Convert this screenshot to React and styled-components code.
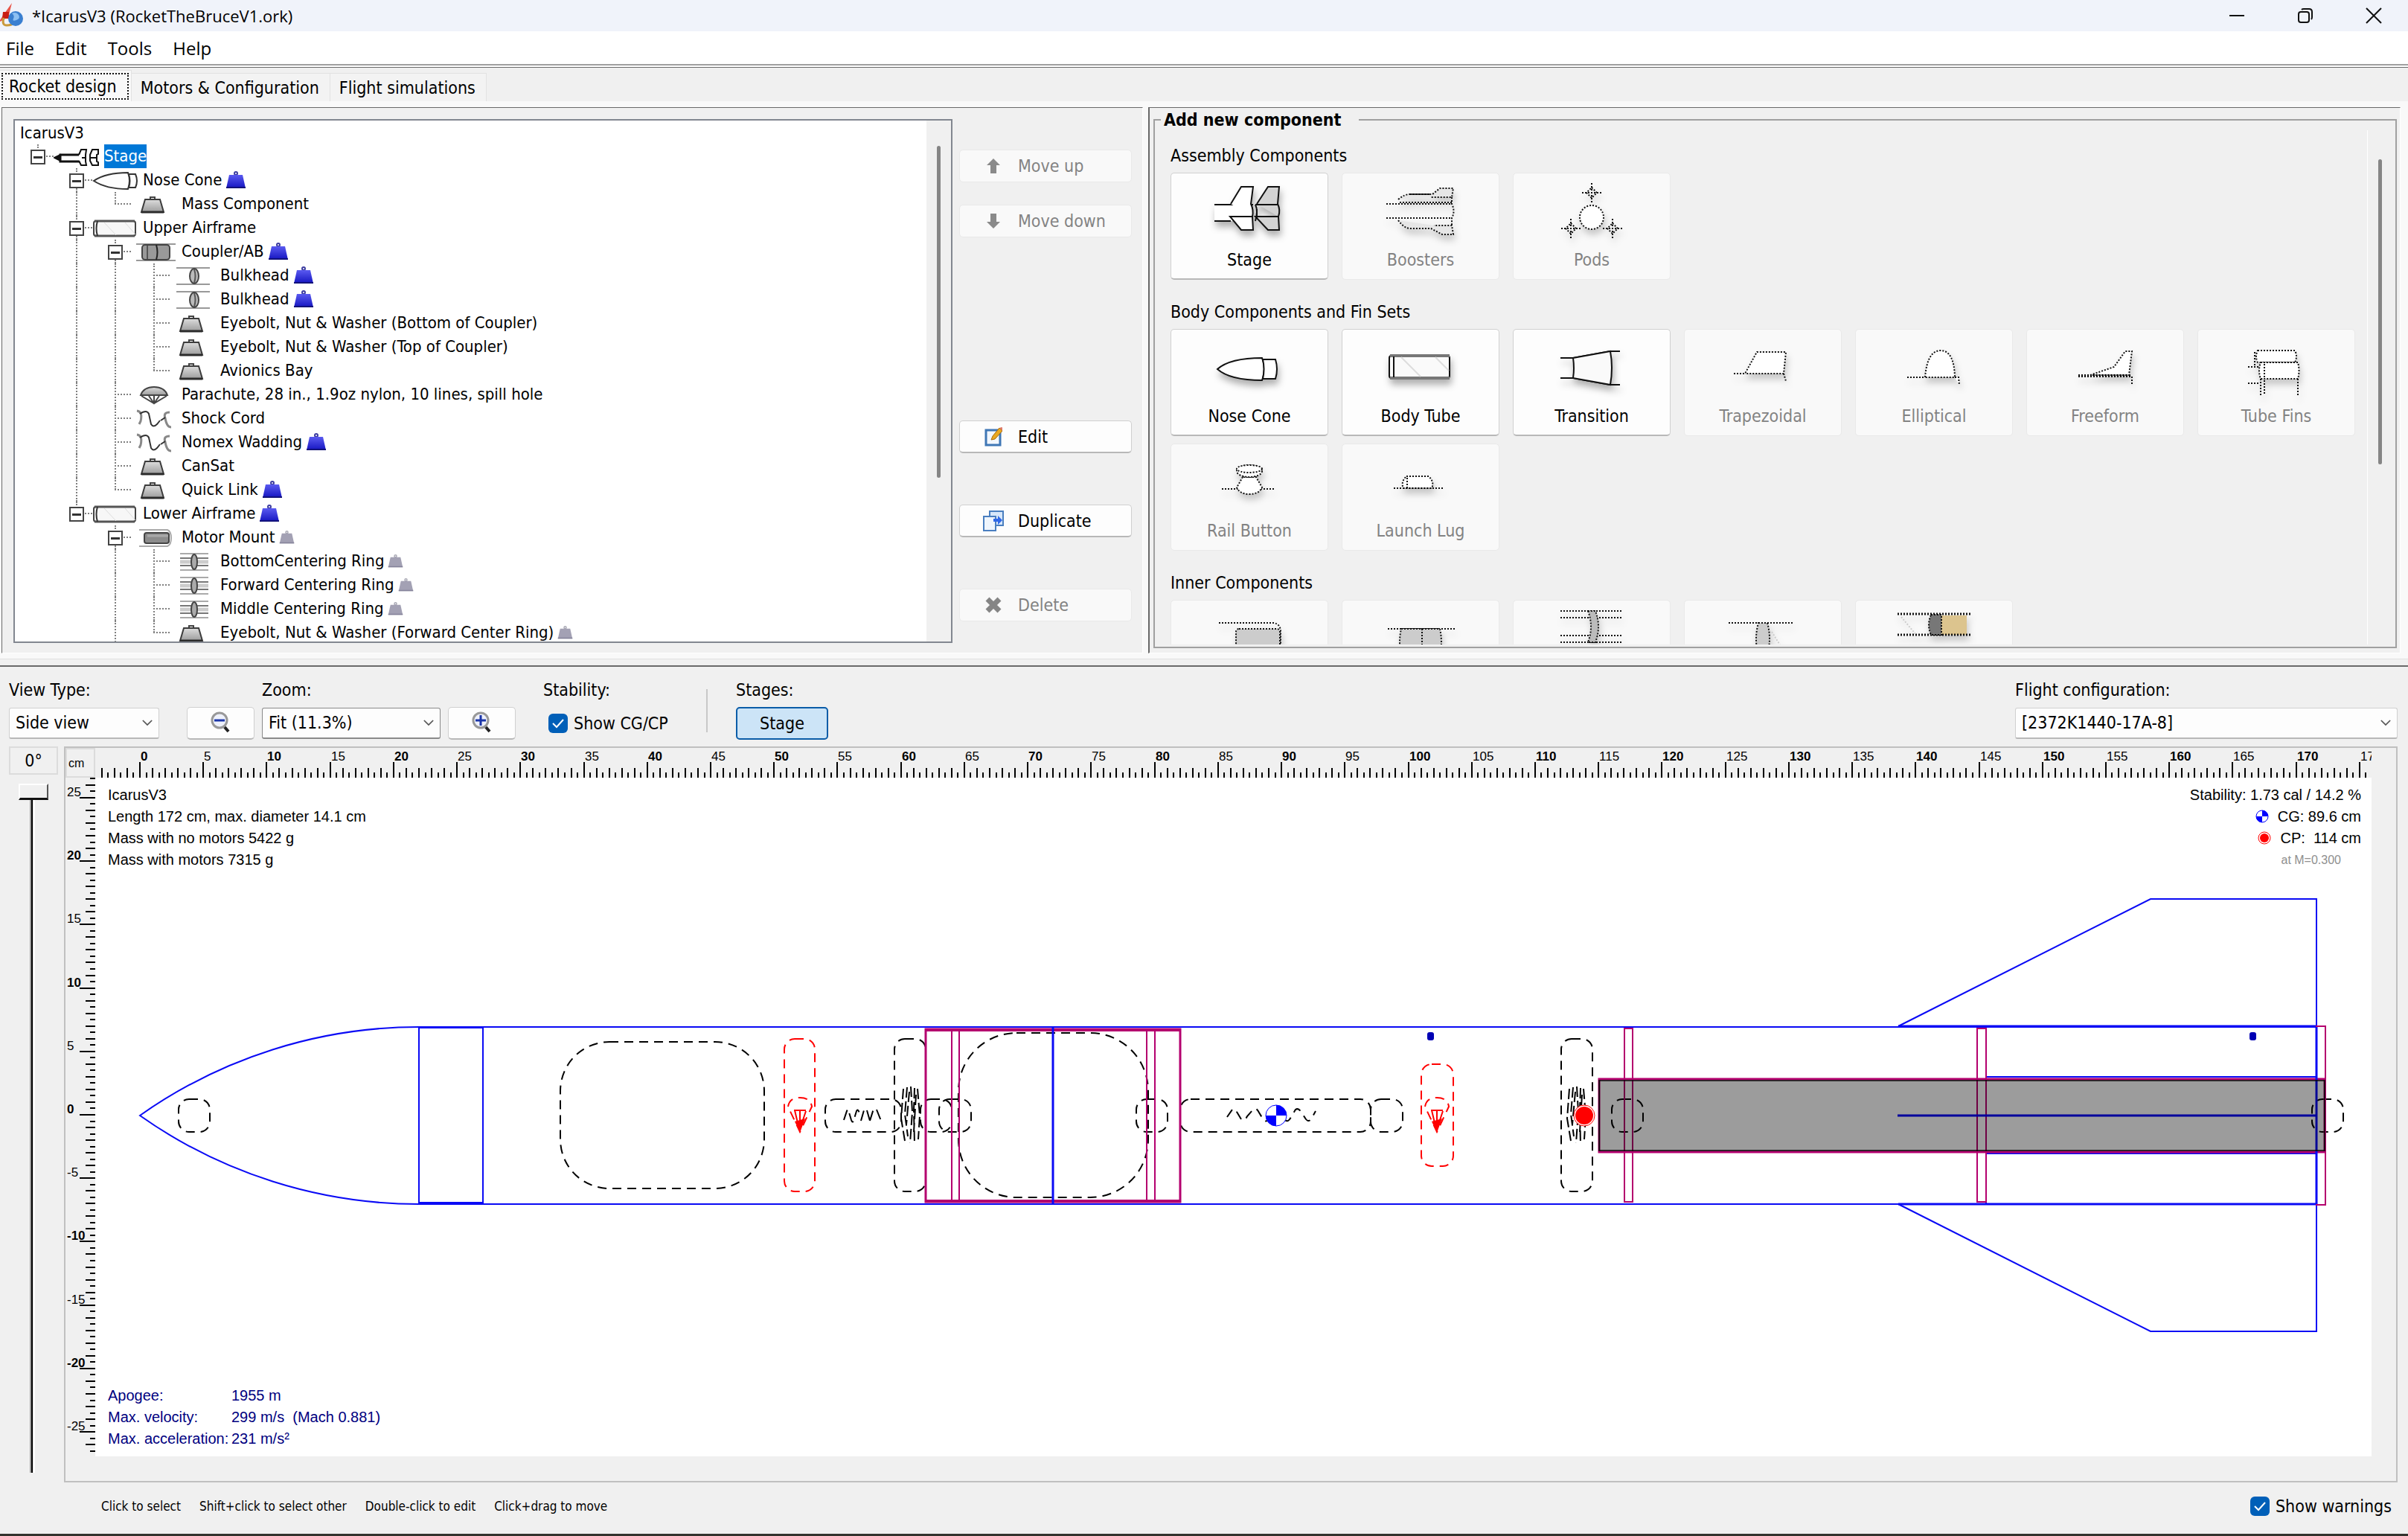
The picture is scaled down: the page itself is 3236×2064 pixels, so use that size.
import React from 'react'
import styled, { createGlobalStyle, css } from 'styled-components'

const TREE = [
  { label: 'Stage', icon: 'stage', guides: ['end'], open: true, selected: true },
  { label: 'Nose Cone', icon: 'nose', guides: ['none', 'tee'], open: true, mass: 'blue' },
  { label: 'Mass Component', icon: 'weight', guides: ['none', 'line', 'end'] },
  { label: 'Upper Airframe', icon: 'tube', guides: ['none', 'tee'], open: true },
  { label: 'Coupler/AB', icon: 'coupler', guides: ['none', 'line', 'tee'], open: true, mass: 'blue' },
  { label: 'Bulkhead', icon: 'bulkhead', guides: ['none', 'line', 'line', 'tee'], mass: 'blue' },
  { label: 'Bulkhead', icon: 'bulkhead', guides: ['none', 'line', 'line', 'tee'], mass: 'blue' },
  { label: 'Eyebolt, Nut & Washer (Bottom of Coupler)', icon: 'weight', guides: ['none', 'line', 'line', 'tee'] },
  { label: 'Eyebolt, Nut & Washer (Top of Coupler)', icon: 'weight', guides: ['none', 'line', 'line', 'tee'] },
  { label: 'Avionics Bay', icon: 'weight', guides: ['none', 'line', 'line', 'end'] },
  { label: 'Parachute, 28 in., 1.9oz nylon, 10 lines, spill hole', icon: 'parachute', guides: ['none', 'line', 'tee'] },
  { label: 'Shock Cord', icon: 'cord', guides: ['none', 'line', 'tee'] },
  { label: 'Nomex Wadding', icon: 'cord', guides: ['none', 'line', 'tee'], mass: 'blue' },
  { label: 'CanSat', icon: 'weight', guides: ['none', 'line', 'tee'] },
  { label: 'Quick Link', icon: 'weight', guides: ['none', 'line', 'end'], mass: 'blue' },
  { label: 'Lower Airframe', icon: 'tube', guides: ['none', 'end'], open: true, mass: 'blue' },
  { label: 'Motor Mount', icon: 'mount', guides: ['none', 'none', 'tee'], open: true, mass: 'grey' },
  { label: 'BottomCentering Ring', icon: 'ring', guides: ['none', 'none', 'line', 'tee'], mass: 'grey' },
  { label: 'Forward Centering Ring', icon: 'ring', guides: ['none', 'none', 'line', 'tee'], mass: 'grey' },
  { label: 'Middle Centering Ring', icon: 'ring', guides: ['none', 'none', 'line', 'tee'], mass: 'grey' },
  { label: 'Eyebolt, Nut & Washer (Forward Center Ring)', icon: 'weight', guides: ['none', 'none', 'line', 'end'], mass: 'grey' },
]

const PALETTE = [
  {
    title: 'Assembly Components',
    items: [
      { label: 'Stage', icon: 'stage', enabled: true },
      { label: 'Boosters', icon: 'boosters' },
      { label: 'Pods', icon: 'pods' },
    ],
  },
  {
    title: 'Body Components and Fin Sets',
    items: [
      { label: 'Nose Cone', icon: 'nose', enabled: true },
      { label: 'Body Tube', icon: 'tube', enabled: true },
      { label: 'Transition', icon: 'transition', enabled: true },
      { label: 'Trapezoidal', icon: 'trapezoidal' },
      { label: 'Elliptical', icon: 'elliptical' },
      { label: 'Freeform', icon: 'freeform' },
      { label: 'Tube Fins', icon: 'tubefins' },
      { label: 'Rail Button', icon: 'railbutton' },
      { label: 'Launch Lug', icon: 'launchlug' },
    ],
  },
  {
    title: 'Inner Components',
    items: [
      { icon: 'innertube', name: 'Inner tube' },
      { icon: 'coupler', name: 'Coupler' },
      { icon: 'ring', name: 'Centering ring' },
      { icon: 'bulkhead', name: 'Bulkhead' },
      { icon: 'block', name: 'Engine block' },
    ],
  },
]

const FLIGHT = [
  ['Apogee:', '1955 m'],
  ['Max. velocity:', '299 m/s\u00a0 (Mach 0.881)'],
  ['Max. acceleration:', '231 m/s²'],
]

const HINTS = ['Click to select', 'Shift+click to select other', 'Double-click to edit', 'Click+drag to move']

/* icons of the component tree, 62 x 32 */

const treeIcons = {
  stage: (
    <g fill="#fff" stroke="#111" strokeWidth="2">
      <path d="M1 18l8-4v8z" fill="#111" />
      <path d="M9 14h28v9H9z" strokeWidth="3" />
      <path d="M34 14l3-7h7l-1 7v9l1 5h-7l-3-6M38 18h6" />
      <path d="M49 14l3-7h8v6l-2 1v9l2 1v4h-8l-3-6zM50 18h9" />
    </g>
  ),
  nose: (
    <g fill="#fdfdfd" stroke="#333" strokeWidth="2">
      <path d="M2 17C14 9 30 6 48 6q4 11 0 22C30 28 14 25 2 17z" />
      <path d="M49 8h9q4 9 0 18h-9q3-9 0-18z" />
    </g>
  ),
  weight: (
    <g>
      <path d="M26 10V7h6v3" fill="none" stroke="#444" strokeWidth="2" />
      <path d="M19 10h20l5 17H14z" fill="url(#greyFade)" stroke="#3c3c3c" strokeWidth="2" />
      <path d="M14 27h30" stroke="#2b2b2b" strokeWidth="3" />
    </g>
  ),
  tube: (
    <g>
      <rect x="2" y="7" width="56" height="20" rx="3" fill="#f7f7f7" stroke="#444" strokeWidth="2" />
      <path d="M3 7h54M3 27h54" stroke="#555" strokeWidth="3" />
      <path d="M7 7q-3 10 0 20" fill="none" stroke="#333" strokeWidth="2" />
      <path d="M16 9l16 17M44 9l14 16" stroke="#ddd" />
    </g>
  ),
  coupler: (
    <g>
      <path d="M7 6h53M7 28h53" stroke="#999" strokeWidth="2" />
      <rect x="15" y="7" width="37" height="20" rx="4" fill="#999" stroke="#444" strokeWidth="2" />
      <path d="M22 8v18" stroke="#555" strokeWidth="2" />
      <path d="M34 7q3 10 0 20" fill="none" stroke="#222" strokeWidth="2" />
    </g>
  ),
  bulkhead: (
    <g>
      <path d="M9 6h45M9 28h45" stroke="#999" strokeWidth="2" />
      <ellipse cx="33" cy="17" rx="6" ry="10" fill="#bbb" stroke="#444" strokeWidth="2" />
      <path d="M33 8q3 9 0 18" fill="none" stroke="#555" strokeWidth="2" />
    </g>
  ),
  parachute: (
    <g stroke="#444" strokeWidth="2" fill="none">
      <path d="M13 17q4-11 18-11t18 11z" fill="url(#greyFade)" />
      <path d="M14 18l17 10 17-10M24 18l7 10 7-10M31 18v9" />
    </g>
  ),
  cord: (
    <g fill="none" strokeWidth="2">
      <path d="M8 6q8 1 5 14l-2 4" stroke="#888" strokeWidth="3" />
      <path d="M12 10q9-6 12 0l3 14q3 5 8 0l4-5" stroke="#333" />
      <path d="M52 8q-9 0-6 8 2 12 8 12" stroke="#888" strokeWidth="3" />
      <path d="M40 19l6-4" stroke="#333" />
    </g>
  ),
  mount: (
    <g>
      <path d="M11 6h38q5 2 5 11t-5 11H11" fill="none" stroke="#aaa" strokeWidth="2" />
      <rect x="18" y="10" width="33" height="14" rx="3" fill="#8c8c8c" stroke="#444" strokeWidth="2" />
      <path d="M22 14h28" stroke="#aaa" strokeWidth="3" />
    </g>
  ),
  ring: (
    <g>
      <path d="M14 6h38M14 28h38" stroke="#aaa" strokeWidth="2" />
      <path d="M14 12h38M14 22h38" stroke="#777" strokeWidth="2" />
      <path d="M14 17h38" stroke="#ccc" strokeWidth="5" />
      <ellipse cx="33" cy="17" rx="4" ry="10" fill="#aaa" stroke="#444" strokeWidth="2" />
    </g>
  ),
}

/* icons of the component buttons, 120 x 88; the disabled ones are stippled */

const cardIcons = {
  stage: (
    <g fill="#fff" stroke="#111" strokeWidth="2">
      <path d="M13 34h50q4 11 0 22H13" stroke="none" />
      <path d="M13 34h52M13 56h22" />
      <path d="M35 33L49 10h16l-3 23q4 8 2 17l1 18H49L34 50h30" />
      <path d="M70 33l15-23h15l-2 23q4 8 1 17l1 18H85L68 50h31M68 34h30M68 34q4 8 0 22M70 40v12" fill="#d3d3d3" />
    </g>
  ),
  boosters: (
    <g>
      <path d="M14 33h88M14 52h88" />
      <path d="M30 27q8-7 16-7h30l10-8h18l-2 12H74M46 20h28M32 31h70" fill="#e6e6e6" />
      <path d="M30 55q8 11 16 11h28l15 8h15l-2-12H78" fill="#e6e6e6" />
      <path d="M102 24v9q5 10 0 19v10" fill="none" />
    </g>
  ),
  pods: (
    <g>
      <circle cx="60" cy="51" r="16" fill="#fff" />
      <path d="M60 11l7 7-7 7-7-7zM32 59l7 7-7 7-7-7zM88 59l7 7-7 7-7-7z" />
      <path d="M60 5v26M47 18h26M32 53v26M19 66h26M88 53v26M75 66h26" />
    </g>
  ),
  nose: (
    <g fill="#fff" stroke="#111" strokeWidth="2">
      <path d="M17 45Q34 30 77 30q6 15 0 30Q34 60 17 45z" />
      <path d="M78 32h17q4 13 0 26H78q3-13 0-26z" />
    </g>
  ),
  tube: (
    <g>
      <rect x="18" y="27" width="81" height="30" rx="3" fill="#fafafa" stroke="#111" strokeWidth="2" />
      <path d="M19 27h80M19 57h80" stroke="#777" strokeWidth="4" />
      <path d="M24 28v28" stroke="#111" strokeWidth="2" />
      <path d="M34 29l26 26M80 29l18 18" stroke="#ddd" strokeWidth="2" />
    </g>
  ),
  transition: (
    <g fill="#fafafa" stroke="#111" strokeWidth="2">
      <path d="M18 30h17l50-9h13M18 57h17l50 9h13" fill="none" />
      <path d="M35 30l50-9q4 22 0 45l-50-9q2-13 0-27z" />
    </g>
  ),
  trapezoidal: <path d="M21 51h15l16-29h39l-3 29H36M88 51l3 10" fill="#fff" />,
  elliptical: <path d="M24 56h24q3-36 21-36t19 36H48M88 56h5l1 10" fill="#fff" />,
  freeform: (
    <g>
      <path d="M40 53l32-11 15-21h9l-4 32z" fill="#fff" />
      <path d="M24 53h72M24 55h72v10" fill="none" />
    </g>
  ),
  tubefins: (
    <g fill="#fff">
      <path d="M35 20h50q4 8 0 16H35q-4-8 0-16z" />
      <path d="M39 36h50q3 11 0 22H39q-4-11 0-22zM44 38v20" />
      <path d="M22 42h14M22 64h16M39 58v22M44 60v20M89 58v22M31 22v20" />
    </g>
  ),
  railbutton: (
    <g fill="#fff">
      <path d="M23 52h70" />
      <path d="M51 36l-8 14q4 9 17 9t17-9l-8-14z" />
      <ellipse cx="60" cy="28" rx="17" ry="8" />
      <ellipse cx="60" cy="25" rx="17" ry="5" />
    </g>
  ),
  launchlug: <path d="M24 51h66M41 35h30q8 8 4 16H37q-4-8 4-16zM42 37v14" fill="#fff" />,
  innertube: (
    <g>
      <path d="M19 22h74q9 2 9 12v30" fill="none" />
      <rect x="42" y="30" width="59" height="36" rx="4" fill="#ccc" />
    </g>
  ),
  coupler: (
    <g>
      <path d="M16 30h90" />
      <path d="M34 30h52q4 18 0 36H34q-4-18 0-36z" fill="#ccc" />
      <path d="M62 30v36" />
    </g>
  ),
  ring: (
    <g>
      <path d="M18 6h84M18 15h84M18 39h84M18 48h84" />
      <path d="M55 6q8 21 0 42h10q8-21 0-42z" fill="#bbb" />
    </g>
  ),
  bulkhead: (
    <g>
      <path d="M14 22h88" />
      <path d="M54 22h12q6 20 0 44H54q-6-22 0-44z" fill="#ccc" />
      <path d="M72 34l20 32" stroke="#ccc" />
    </g>
  ),
  block: (
    <g>
      <path d="M70 12h34v26H70z" fill="#dcc48e" stroke="none" />
      <path d="M11 10h98M11 38h98" strokeWidth="3" />
      <path d="M56 11h14v27H56q-6-13 0-27z" fill="#777" />
      <path d="M16 14l20 24" stroke="#ccc" />
    </g>
  ),
}

function TreeRow({ node }) {
  const last = node.guides.length - 1
  return (
    <Row role="treeitem">
      {node.guides.map((kind, i) => (
        <Guide key={i} $kind={kind}>
          {i === last && node.open && <Expander type="button" aria-label={`Collapse ${node.label}`} />}
        </Guide>
      ))}
      <TreeIcon viewBox="0 0 62 32" aria-hidden="true">{treeIcons[node.icon]}</TreeIcon>
      <RowLabel $selected={node.selected}>{node.label}</RowLabel>
      {node.mass && <MassMark kind={node.mass} />}
    </Row>
  )
}

function MassMark({ kind }) {
  const blue = kind === 'blue'
  return (
    <MassIcon viewBox="0 0 28 24" $small={!blue} aria-hidden="true">
      <circle cx="14" cy="3" r="2" fill="none" stroke={blue ? '#3c3ca0' : '#a9a9b5'} strokeWidth="2" />
      <path d="M5 5h18l4 18H1z" fill={blue ? 'url(#blueFade)' : '#a3a1b4'} />
      <path d="M1 22h26" stroke={blue ? '#12127a' : '#85839a'} strokeWidth="2" />
    </MassIcon>
  )
}

function Select({ label, value, $width, $strong }) {
  const id = label.toLowerCase().replace(/[^a-z]/g, '')
  return (
    <Field $width={$width}>
      <FieldLabel htmlFor={id}>{label}</FieldLabel>
      <SelectBox>
        <SelectInput id={id} defaultValue={value} $strong={$strong}>
          <option>{value}</option>
        </SelectInput>
        <Chevron viewBox="0 0 16 10" aria-hidden="true">
          <path d="M1 1l7 7 7-7" fill="none" stroke="#555" strokeWidth="2" />
        </Chevron>
      </SelectBox>
    </Field>
  )
}

function Check({ label }) {
  return (
    <CheckLabel>
      <CheckBox>
        <CheckInput type="checkbox" defaultChecked />
        <CheckMark viewBox="0 0 26 26" aria-hidden="true">
          <path d="M6 13l5 5 9-10" fill="none" stroke="#fff" strokeWidth="2" />
        </CheckMark>
      </CheckBox>
      {label}
    </CheckLabel>
  )
}

function ZoomButton({ plus }) {
  return (
    <ToolButton type="button" aria-label={plus ? 'Zoom in' : 'Zoom out'}>
      <svg width="30" height="32" viewBox="0 0 30 32">
        <path d="M19 21l6 7" stroke="#222" strokeWidth="4" />
        <circle cx="13" cy="13" r="10" fill="#eef1fb" stroke="#999" strokeWidth="3" />
        <path d={plus ? 'M6 13h14M13 6v14' : 'M6 13h14'} stroke="#1b35a8" strokeWidth="3" />
      </svg>
    </ToolButton>
  )
}

const CM = 17.045

function HorizontalRuler() {
  const ticks = []
  for (let half = -6; half <= 351; half++) {
    const x = Math.round(60 + (half * CM) / 2)
    const major = half % 10 === 0
    const height = major ? 21 : half % 2 === 0 ? 13 : 7
    ticks.push(<rect key={half} x={x - 1} y={40 - height} width="2" height={height} />)
    if (major && half >= 0) {
      ticks.push(
        <text key={`t${half}`} x={x + 1} y="17" fontWeight={half % 20 === 0 ? 700 : 400}>{half / 2}</text>
      )
    }
  }
  return <RulerSvg>{ticks}</RulerSvg>
}

function VerticalRuler() {
  const ticks = []
  for (let half = -53; half <= 53; half++) {
    const y = Math.round(453 - (half * CM) / 2)
    const major = half % 10 === 0
    const width = major ? 21 : half % 2 === 0 ? 13 : 7
    ticks.push(<rect key={half} x={40 - width} y={y - 1} width={width} height="2" />)
    if (major) {
      ticks.push(
        <text key={`t${half}`} x="2" y={y - 2} fontWeight={half % 20 === 0 ? 700 : 400}>{half / 2}</text>
      )
    }
  }
  return <RulerSvg>{ticks}</RulerSvg>
}

function Capsule({ x, y, w, h, r = 14, color = '#000' }) {
  return (
    <rect x={x} y={y} width={w} height={h} rx={r} fill="none" stroke={color} strokeWidth="2" strokeDasharray="12 8" />
  )
}

function ChuteMark({ x }) {
  return (
    <g transform={`translate(${x} 454)`} fill="none" stroke="#f00" strokeWidth="2">
      <path d="M-16-12Q-14-24 0-24T16-12L0 22z" strokeDasharray="12 8" />
      <path d="M-8-7H8M0-7V10M-7-7l4 17M8-6L2 12" />
      <path d="M-7 8L0 23 7 4z" fill="#f00" stroke="none" />
    </g>
  )
}

function WaddingMark({ x }) {
  return (
    <path
      d={`M${x - 10} 418l-3 40 5 30M${x - 5} 416l-3 36 4 30M${x} 415l2 34-3 42M${x + 5} 417l-1 30 1 46M${x + 9} 418l3 36-2 32M${x - 2} 422l-4 44M${x + 7} 426l-3 50`}
      fill="none"
      stroke="#000"
      strokeWidth="2"
      strokeDasharray="14 5"
    />
  )
}

function CgMark({ x, y, r }) {
  return (
    <g transform={`translate(${x} ${y})`}>
      <circle r={r} fill="#fff" stroke="#00f" />
      <path d={`M0 0V${-r}A${r} ${r} 0 0 1 ${r} 0zM0 0V${r}A${r} ${r} 0 0 1 ${-r} 0z`} fill="#00f" />
    </g>
  )
}

function CpMark({ x, y, r }) {
  return (
    <g transform={`translate(${x} ${y})`}>
      <circle r={r} fill="#fff" stroke="#f00" />
      <circle r={r - 2} fill="#f00" />
    </g>
  )
}

function Rocket() {
  return (
    <RocketSvg role="img" aria-label="Side view of the rocket">
      <g fill="none" stroke="#0a0af5" strokeWidth="2">
        <path d="M435 335A650 650 0 0 0 60 454A650 650 0 0 0 435 573" />
        <rect x="435" y="336" width="86" height="235" />
        <path d="M435 335H2985M435 573H2985" />
        <path d="M435 335V573M1287 334V574" />
        <path d="M2423 334L2762 163H2985V744H2762L2423 573" />
        <path d="M2423 334H2985M2423 573H2985" strokeWidth="3" />
        <rect x="2541" y="335" width="444" height="67" />
        <rect x="2541" y="505" width="444" height="68" />
      </g>
      <Capsule x={112} y={432} w={42} h={44} />
      <Capsule x={625} y={355} w={274} h={197} r={66} />
      <Capsule x={926} y={351} w={41} h={205} color="#f00" />
      <ChuteMark x={947} />
      <Capsule x={981} y={432} w={102} h={44} />
      <path d="M1006 460l4-12q2-4 3 2l3 10q2 6 4-2l3-10q2-4 4 3M1029 461l4-14M1037 447l4 14M1041 461l5-16M1050 446l6 15" fill="none" stroke="#000" strokeWidth="2" strokeDasharray="14 6" />
      <Capsule x={1074} y={351} w={42} h={205} />
      <WaddingMark x={1096} />
      <Capsule x={1109} y={432} w={42} h={44} />
      <Capsule x={1134} y={432} w={43} h={44} />
      <Capsule x={1160} y={343} w={255} h={221} r={78} />
      <Capsule x={1399} y={432} w={42} h={44} />
      <Capsule x={1458} y={432} w={256} h={44} />
      <path d="M1521 456l7-10q3-3 6 3l6 10q4 4 8-4l8-9q4-4 8 4l6 10q4 4 8-3l6-10q4-4 8 3l7 10q4 4 8-4l6-10q4-3 8 4l6 9q4 5 8-2l5-9" fill="none" stroke="#000" strokeWidth="2" strokeDasharray="12 8" />
      <Capsule x={1714} y={432} w={43} h={44} />
      <Capsule x={1782} y={385} w={43} h={137} color="#f00" />
      <ChuteMark x={1803} />
      <Capsule x={1970} y={351} w={42} h={205} />
      <WaddingMark x={1991} />
      <Capsule x={2038} y={432} w={42} h={44} />
      <Capsule x={2979} y={432} w={42} h={44} />
      <g fill="none" stroke="#b4006e" strokeWidth="2">
        <rect x="1116" y="338" width="342" height="232" strokeWidth="3" />
        <path d="M1116 340h342M1116 568h342" />
        <rect x="1151" y="340" width="10" height="228" />
        <rect x="1413" y="340" width="11" height="228" />
        <rect x="2055" y="337" width="11" height="233" />
        <rect x="2529" y="337" width="12" height="233" />
        <rect x="2985" y="334" width="12" height="240" />
        <rect x="2021" y="405" width="975" height="98" strokeWidth="3" />
      </g>
      <path d="M1287 334V574M2985 335V573" stroke="#0a0af5" strokeWidth="3" />
      <path d="M2422 454H2985" stroke="#00f" strokeWidth="3" />
      <rect x="2021" y="407" width="975" height="94" fill="#000" fillOpacity=".39" stroke="#000" strokeOpacity=".75" strokeWidth="2" />
      <g fill="#0000b4">
        <rect x="1790" y="342" width="9" height="11" rx="3" />
        <rect x="2895" y="342" width="9" height="11" rx="3" />
      </g>
      <CgMark x={1587} y={454} r={14} />
      <CpMark x={2001} y={454} r={14} />
    </RocketSvg>
  )
}

function App() {
  return (
    <Window>
      <GlobalStyle />
      <Defs aria-hidden="true">
        <linearGradient id="greyFade" x1="0" y1="0" x2="0" y2="1">
          <stop offset="0" stopColor="#ddd" />
          <stop offset="1" stopColor="#9c9c9c" />
        </linearGradient>
        <linearGradient id="blueFade" x1="0" y1="0" x2="0" y2="1">
          <stop offset="0" stopColor="#5a5af0" />
          <stop offset="1" stopColor="#1414c0" />
        </linearGradient>
      </Defs>

      <TitleBar>
        <svg width="32" height="34" viewBox="0 0 32 34" aria-hidden="true">
          <path d="M16 0L6 14-2 26l8-4 6-6z" fill="#e8564a" />
          <path d="M4 12h8v9H3z" fill="#c81e14" />
          <path d="M5 20q-3 10 4 10t10-4" fill="none" stroke="#c99a3c" strokeWidth="3" />
          <circle cx="21" cy="21" r="10" fill="#3a7fd0" />
          <path d="M16 14q6-3 9 2t-3 7-4-2-2-7z" fill="#8dc0f2" />
        </svg>
        <Title>*IcarusV3 (RocketTheBruceV1.ork)</Title>
        <WindowButton type="button" aria-label="Minimize">
          <svg width="22" height="22"><path d="M1 11h20" stroke="#111" strokeWidth="2" /></svg>
        </WindowButton>
        <WindowButton type="button" aria-label="Restore">
          <svg width="22" height="22" fill="none" stroke="#111" strokeWidth="2">
            <rect x="2" y="6" width="14" height="14" rx="3" />
            <path d="M6 3q1-1 3-1h7q4 0 4 4v7q0 2-1 3" />
          </svg>
        </WindowButton>
        <WindowButton type="button" aria-label="Close">
          <svg width="22" height="22"><path d="M1 1l20 20M21 1L1 21" stroke="#111" strokeWidth="2" /></svg>
        </WindowButton>
      </TitleBar>
      <MenuBar>
        {['File', 'Edit', 'Tools', 'Help'].map(name => (
          <MenuItem key={name} type="button">{name}</MenuItem>
        ))}
      </MenuBar>

      <DesignPane>
        <Tabs role="tablist">
          <Tab type="button" role="tab" $active><span>Rocket design</span></Tab>
          <Tab type="button" role="tab"><span>Motors &amp; Configuration</span></Tab>
          <Tab type="button" role="tab"><span>Flight simulations</span></Tab>
        </Tabs>
        <TabBody>
          <TreePanel>
            <TreeBox>
              <Tree role="tree">
                <Row><RootLabel>IcarusV3</RootLabel></Row>
                {TREE.map((node, i) => <TreeRow key={i} node={node} />)}
              </Tree>
              <TreeScroll><Thumb $height="67%" /></TreeScroll>
            </TreeBox>
            <Actions>
              <ActionGroup $gap={30}>
                <ActionButton type="button" disabled>
                  <svg width="24" height="24" viewBox="0 0 24 24"><path d="M12 2l9 9h-5v11H8V11H3z" fill="#8a8a8a" /></svg>
                  Move up
                </ActionButton>
                <ActionButton type="button" disabled>
                  <svg width="24" height="24" viewBox="0 0 24 24"><path d="M12 22l9-9h-5V2H8v11H3z" fill="#8a8a8a" /></svg>
                  Move down
                </ActionButton>
              </ActionGroup>
              <ActionGroup $gap={69}>
                <ActionButton type="button">
                  <svg width="24" height="26" viewBox="0 0 24 26">
                    <path d="M2 4h19v20H2z" fill="#f2f7fd" stroke="#3f77b5" strokeWidth="3" />
                    <path d="M9 17l2-5L20 1l4 4-10 11z" fill="#e9a820" stroke="#a86a10" />
                    <path d="M20 1l4 4 1-4-2-1z" fill="#e07a6a" />
                  </svg>
                  Edit
                </ActionButton>
                <ActionButton type="button">
                  <svg width="28" height="28" viewBox="0 0 28 28">
                    <path d="M9 1h18v19H9z" fill="#d7e7fa" stroke="#4a7fc0" strokeWidth="2" />
                    <path d="M1 8h16v19H1z" fill="#eef5fd" stroke="#4a7fc0" strokeWidth="2" />
                    <path d="M14 11h6V7l6 6-6 6v-4h-6z" fill="#2f68e8" />
                  </svg>
                  Duplicate
                </ActionButton>
                <ActionButton type="button" disabled>
                  <svg width="24" height="24" viewBox="0 0 24 24"><path d="M4 4l16 16M20 4L4 20" stroke="#858585" strokeWidth="7" /></svg>
                  Delete
                </ActionButton>
              </ActionGroup>
            </Actions>
          </TreePanel>

          <PalettePanel>
            <PaletteBox>
              <legend>Add new component</legend>
              <PaletteScroller>
                <Palette>
                  {PALETTE.map(group => (
                    <section key={group.title}>
                      <GroupTitle>{group.title}</GroupTitle>
                      <Cards>
                        {group.items.map(item => (
                          <Card key={item.icon} type="button" disabled={!item.enabled} aria-label={item.name}>
                            <CardIcon viewBox="0 0 120 88" $stippled={!item.enabled} aria-hidden="true">
                              {cardIcons[item.icon]}
                            </CardIcon>
                            {item.label}
                          </Card>
                        ))}
                      </Cards>
                    </section>
                  ))}
                </Palette>
                <PaletteScroll><Thumb $height="63%" /></PaletteScroll>
              </PaletteScroller>
            </PaletteBox>
          </PalettePanel>
        </TabBody>
      </DesignPane>

      <FigurePane>
        <Toolbar>
          <Select label="View Type:" value="Side view" $width={202} />
          <ToolGroup>
            <ZoomButton />
            <Select label="Zoom:" value="Fit (11.3%)" $width={240} $strong />
            <ZoomButton plus />
          </ToolGroup>
          <Field $width={180}>
            <FieldLabel as="span">Stability:</FieldLabel>
            <Indent><Check label="Show CG/CP" /></Indent>
          </Field>
          <Separator />
          <Field $width={124}>
            <FieldLabel as="span">Stages:</FieldLabel>
            <StageToggle type="button" aria-pressed="true">Stage</StageToggle>
          </Field>
          <Push />
          <Select label="Flight configuration:" value="[2372K1440-17A-8]" $width={514} />
        </Toolbar>

        <FigureRow>
          <Rotation>
            <AngleInput aria-label="Rotation" defaultValue="0°" />
            <AngleSlider type="range" aria-label="Rotation slider" min="0" max="360" defaultValue="0" />
          </Rotation>
          <Frame>
            <Unit>cm</Unit>
            <HorizontalRuler />
            <VerticalRuler />
            <Canvas>
              <Rocket />
              <Info>
                <p>IcarusV3</p>
                <p>Length 172 cm, max. diameter 14.1 cm</p>
                <p>Mass with no motors 5422 g</p>
                <p>Mass with motors 7315 g</p>
              </Info>
              <StabilityInfo>
                <p>Stability: 1.73 cal / 14.2 %</p>
                <p>
                  <svg width="18" height="18"><CgMark x={9} y={9} r={8} /></svg>
                  CG: 89.6 cm
                </p>
                <p>
                  <svg width="18" height="18"><CpMark x={9} y={9} r={8} /></svg>
                  CP:&nbsp; 114 cm
                </p>
                <MachNote>at M=0.300</MachNote>
              </StabilityInfo>
              <FlightInfo>
                {FLIGHT.map(([name, value]) => (
                  <React.Fragment key={name}>
                    <dt>{name}</dt>
                    <dd>{value}</dd>
                  </React.Fragment>
                ))}
              </FlightInfo>
            </Canvas>
          </Frame>
        </FigureRow>

        <StatusBar>
          {HINTS.map(hint => <span key={hint}>{hint}</span>)}
          <Push />
          <Check label="Show warnings" />
        </StatusBar>
      </FigurePane>
    </Window>
  )
}

export default App

const GlobalStyle = createGlobalStyle`
  * { box-sizing: border-box; }
  body { margin: 0; }
  p, dl, dd { margin: 0; }
  svg { display: block; flex: none; }
  button, input, select { font: inherit; color: inherit; margin: 0; padding: 0; }
`

const Window = styled.div`
  display: flex;
  flex-direction: column;
  height: 100vh;
  background: #f0f0f0;
  border-bottom: 3px solid #33332e;
  color: #000;
  font-family: 'DejaVu Sans Condensed', 'Noto Sans', sans-serif;
  font-size: 23px;
  overflow: hidden;
`

const Defs = styled.svg`
  position: absolute;
  width: 0;
  height: 0;
`

const TitleBar = styled.header`
  display: flex;
  align-items: center;
  height: 42px;
  background: #f0f3fa;
  font-family: 'Open Sans', 'Noto Sans', sans-serif;
  font-size: 22px;
`

const Title = styled.h1`
  flex: 1;
  margin: 0 0 0 11px;
  font-size: inherit;
  font-weight: 400;
`

const WindowButton = styled.button`
  display: flex;
  align-items: center;
  justify-content: center;
  width: 92px;
  height: 100%;
  border: 0;
  background: none;
`

const MenuBar = styled.nav`
  display: flex;
  gap: 28px;
  height: 49px;
  padding: 0 8px 5px;
  background: linear-gradient(#fff 44px, #a0a0a0 44px 46px, #fff 46px 48px, #696969 48px);
  font-family: 'Open Sans', 'Noto Sans', sans-serif;
  font-size: 24px;
`

const MenuItem = styled.button`
  border: 0;
  background: none;
`

/* split pane: the two halves share the height that the bars leave */

const DesignPane = styled.main`
  display: flex;
  flex-direction: column;
  flex: 806 1 0;
  min-height: 0;
  padding-bottom: 8px;
  border-bottom: 2px solid #696969;
`

const Tabs = styled.div`
  display: flex;
  align-items: flex-end;
  height: 45px;
`

const Tab = styled.button`
  height: 38px;
  padding: 0 14px 0 12px;
  border: 1px solid #e2e2e2;
  border-left: 0;
  border-bottom: 0;
  background: #f3f3f3;

  ${props => props.$active && css`
    height: 42px;
    padding: 0 5px 0 4px;
    background: #f9f9f9;

    span {
      display: block;
      padding: 0 14px 0 8px;
      outline: 2px dotted #111;
      line-height: 32px;
    }
  `}
`

const TabBody = styled.div`
  display: grid;
  grid-template-columns: minmax(0, 1534fr) minmax(0, 1683fr);
  gap: 7px;
  flex: 1;
  min-height: 0;
  padding: 8px 10px 7px 2px;
  background: #f9f9f9;
  border-bottom: 1px solid #e2e2e2;
`

const TreePanel = styled.section`
  display: flex;
  gap: 9px;
  min-height: 0;
  padding: 15px 14px 13px 15px;
  background: #f0f0f0;
  border: 1px solid #fff;
  border-top-color: #696969;
  border-left-color: #696969;
`

const TreeBox = styled.div`
  display: flex;
  flex: 1;
  min-width: 0;
  border: 2px solid #828790;
  background: #fff;
`

const Tree = styled.div`
  flex: 1;
  min-width: 0;
  overflow: hidden;
  font-size: 22px;
`

const Row = styled.div`
  display: flex;
  align-items: center;
  height: 32px;
  white-space: nowrap;
`

const RootLabel = styled.span`
  padding-left: 7px;
`

const Guide = styled.span`
  position: relative;
  flex: none;
  width: 52px;
  height: 32px;

  &::before {
    content: '';
    position: absolute;
    top: 0;
    left: 30px;
    height: ${props => (props.$kind === 'end' ? '50%' : '100%')};
    border-left: ${props => (props.$kind === 'none' ? '0' : '2px dotted #808080')};
  }

  &::after {
    content: '';
    position: absolute;
    top: 15px;
    left: 30px;
    width: 22px;
    border-top: ${props => (props.$kind === 'tee' || props.$kind === 'end' ? '2px dotted #808080' : '0')};
  }
`

const Expander = styled.button`
  position: absolute;
  z-index: 1;
  top: 7px;
  left: 21px;
  width: 20px;
  height: 20px;
  border: 2px solid #444;
  background: linear-gradient(#333, #333) center / 12px 3px no-repeat #fff;
`

const TreeIcon = styled.svg`
  width: 62px;
  height: 32px;
`

const RowLabel = styled.span`
  margin-left: 6px;
  line-height: 32px;
  color: ${props => (props.$selected ? '#fff' : 'inherit')};
  background: ${props => (props.$selected ? '#0078d7' : 'none')};
`

const MassIcon = styled.svg`
  width: ${props => (props.$small ? 21 : 28)}px;
  height: ${props => (props.$small ? 18 : 24)}px;
  margin-left: 5px;
`

const TreeScroll = styled.div`
  width: 33px;
  padding: 34px 0 0 14px;
  background: #f0f0f0;
`

const Thumb = styled.div`
  width: 5px;
  height: ${props => props.$height};
  border-radius: 3px;
  background: #858585;
`

const Actions = styled.div`
  display: flex;
  flex-direction: column;
  gap: 246px;
  width: 232px;
  padding-top: 41px;
`

const ActionGroup = styled.div`
  display: flex;
  flex-direction: column;
  gap: ${props => props.$gap}px;
`

const raised = css`
  border: 1px solid #d0d0d0;
  border-bottom: 2px solid #b8b8b8;
  border-radius: 5px;
  background: #fdfdfd;

  &:disabled {
    border: 1px solid #e9e9e9;
    background: #f9f9f9;
    color: #838383;
  }
`

const ActionButton = styled.button`
  display: grid;
  grid-template-columns: 34px 1fr;
  gap: 16px;
  align-items: center;
  height: 44px;
  padding-left: 28px;
  text-align: left;
  ${raised}

  svg {
    justify-self: center;
  }
`

const PalettePanel = styled.section`
  display: grid;
  min-height: 0;
  padding: 2px 4px 6px 5px;
  background: #f0f0f0;
  border: 1px solid #fff;
  border-top-color: #696969;
  border-left: 2px solid #696969;
`

const PaletteBox = styled.fieldset`
  display: flex;
  min-width: 0;
  min-height: 0;
  margin: 0;
  padding: 0 0 3px;
  border: 2px solid #a0a0a0;

  legend {
    margin-left: 8px;
    padding: 0 24px 0 4px;
    font-weight: 700;
    line-height: 28px;
  }
`

const PaletteScroller = styled.div`
  display: flex;
  flex: 1;
  min-width: 0;
  overflow: hidden;
`

const Palette = styled.div`
  display: flex;
  flex-direction: column;
  gap: 29px;
  flex: 1;
  padding: 20px 15px 0 21px;
  overflow: hidden;
  border-right: 1px solid #fff;
`

const GroupTitle = styled.h2`
  margin: 0 0 9px;
  font-size: inherit;
  font-weight: 400;
  line-height: 28px;
`

const Cards = styled.div`
  display: grid;
  grid-template-columns: repeat(auto-fill, 212px);
  gap: 10px 18px;
`

const Card = styled.button`
  display: flex;
  flex-direction: column;
  align-items: center;
  gap: 6px;
  height: 144px;
  padding-top: 8px;
  line-height: 28px;
  ${raised}
`

const CardIcon = styled.svg`
  width: 120px;
  height: 88px;
  filter: drop-shadow(2px 7px 5px rgba(0, 0, 0, 0.3));

  ${props => props.$stippled && css`
    fill: none;
    stroke: #111;
    stroke-width: 2;
    stroke-dasharray: 2 2;
    filter: drop-shadow(2px 7px 5px rgba(0, 0, 0, 0.2));
  `}
`

const PaletteScroll = styled.div`
  width: 37px;
  padding: 39px 0 0 14px;
`

const FigurePane = styled.section`
  display: flex;
  flex-direction: column;
  flex: 1164 1 0;
  min-height: 0;
  padding: 18px 14px 0 12px;
`

const Toolbar = styled.div`
  display: flex;
  align-items: flex-end;
`

const ToolGroup = styled.div`
  display: flex;
  align-items: flex-end;
  gap: 10px;
  margin: 0 37px;
`

const Field = styled.div`
  display: flex;
  flex-direction: column;
  gap: 10px;
  width: ${props => props.$width}px;
`

const FieldLabel = styled.label`
  line-height: 26px;
`

const SelectBox = styled.div`
  display: grid;
  align-items: center;
  height: 44px;

  > * {
    grid-area: 1 / 1;
  }
`

const SelectInput = styled.select`
  appearance: none;
  width: 100%;
  height: 42px;
  padding: 0 40px 0 8px;
  border: 1px solid ${props => (props.$strong ? '#8a8a8a' : '#d0d0d0')};
  border-bottom: 2px solid ${props => (props.$strong ? '#8a8a8a' : '#b8b8b8')};
  border-radius: 3px;
  background: #fdfdfd;
`

const Chevron = styled.svg`
  width: 14px;
  height: 9px;
  margin-right: 9px;
  justify-self: end;
  pointer-events: none;
`

const ToolButton = styled.button`
  display: flex;
  align-items: center;
  justify-content: center;
  width: 91px;
  height: 44px;
  ${raised}
`

const Indent = styled.div`
  display: flex;
  align-items: center;
  height: 44px;
  padding-left: 7px;
`

const CheckLabel = styled.label`
  display: flex;
  align-items: center;
  gap: 8px;
  font-size: 23px;
`

const CheckBox = styled.span`
  display: grid;

  > * {
    grid-area: 1 / 1;
  }
`

const CheckInput = styled.input`
  appearance: none;
  width: 26px;
  height: 26px;
  border-radius: 6px;
  background: #005fb8;
`

const CheckMark = styled.svg`
  width: 26px;
  height: 26px;
  pointer-events: none;
`

const Separator = styled.div`
  width: 2px;
  height: 58px;
  margin: 0 38px 10px 39px;
  background: #c8c8c8;
`

const StageToggle = styled.button`
  height: 44px;
  border: 2px solid #0a5ca8;
  border-radius: 5px;
  background: #cce4f7;
`

const Push = styled.div`
  flex: 1;
`

const FigureRow = styled.div`
  display: flex;
  gap: 8px;
  flex: 1;
  min-height: 0;
  margin-top: 9px;
`

const Rotation = styled.div`
  display: flex;
  flex-direction: column;
  align-items: center;
  gap: 12px;
  width: 66px;
  padding-bottom: 13px;
`

const AngleInput = styled.input`
  width: 66px;
  height: 38px;
  border: 2px solid #dcdcdc;
  background: #f0f0f0;
  text-align: center;
`

const AngleSlider = styled.input`
  appearance: none;
  writing-mode: vertical-lr;
  flex: 1;
  min-height: 0;
  width: 40px;
  background: linear-gradient(90deg, transparent 15px, #a0a0a0 15px 17px, #000 17px 19px, #e4e4e4 19px 20px, #fff 20px 22px, transparent 22px);

  &::-webkit-slider-thumb {
    appearance: none;
    width: 40px;
    height: 22px;
    border: 2px solid #fff;
    border-right-color: #555;
    border-bottom: 3px solid #111;
    background: #f0f0f0;
  }
`

const Frame = styled.div`
  display: grid;
  grid-template-columns: 40px minmax(0, 1fr);
  grid-template-rows: 40px minmax(0, 1fr);
  flex: 1;
  min-width: 0;
  padding: 0 33px 33px 0;
  border: 2px solid #c0c0c0;
  font-family: 'Liberation Sans', Arial, sans-serif;
`

const Unit = styled.div`
  padding-left: 2px;
  border: 2px solid #dcdcdc;
  font-size: 16px;
  line-height: 38px;
`

const RulerSvg = styled.svg`
  width: 100%;
  height: 100%;
  overflow: hidden;
  font-size: 17px;
`

const Canvas = styled.div`
  display: grid;
  min-height: 0;
  background: #fff;
  font-size: 20px;
  line-height: 29px;

  > * {
    grid-area: 1 / 1;
  }
`

const RocketSvg = styled.svg`
  width: 100%;
  height: 100%;
  overflow: hidden;
`

const Info = styled.div`
  align-self: start;
  justify-self: start;
  padding: 9px 17px;
`

const StabilityInfo = styled.div`
  align-self: start;
  justify-self: end;
  padding: 9px 14px;

  p {
    display: flex;
    align-items: center;
    justify-content: flex-end;
    gap: 12px;
  }
`

const MachNote = styled.div`
  padding-right: 27px;
  color: #8f8f8f;
  font-size: 16px;
  text-align: right;
`

const FlightInfo = styled.dl`
  display: grid;
  grid-template-columns: 166px auto;
  align-self: end;
  justify-self: start;
  padding: 9px 17px;
  color: #000080;
`

const StatusBar = styled.footer`
  display: flex;
  align-items: center;
  gap: 25px;
  height: 69px;
  padding: 0 8px 6px 124px;
  font-size: 17px;
`
